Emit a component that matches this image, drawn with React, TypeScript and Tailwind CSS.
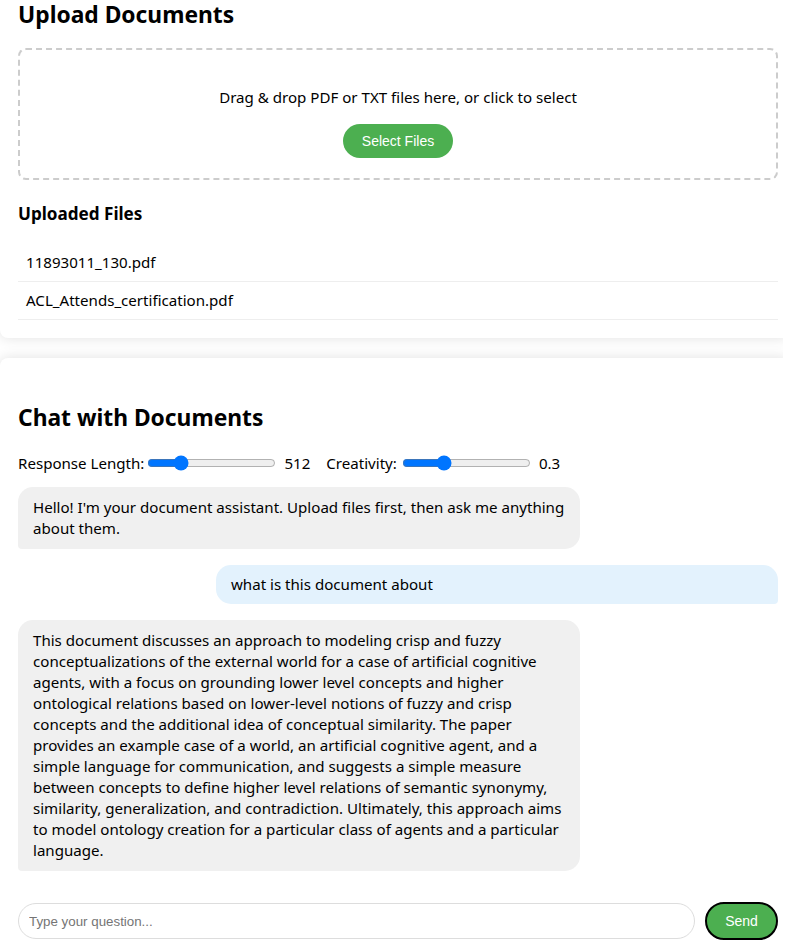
import React, { useState } from "react";

const answer =
  "This document discusses an approach to modeling crisp and fuzzy conceptualizations of the external world for a case of artificial cognitive agents, with a focus on grounding lower level concepts and higher ontological relations based on lower-level notions of fuzzy and crisp concepts and the additional idea of conceptual similarity. The paper provides an example case of a world, an artificial cognitive agent, and a simple language for communication, and suggests a simple measure between concepts to define higher level relations of semantic synonymy, similarity, generalization, and contradiction. Ultimately, this approach aims to model ontology creation for a particular class of agents and a particular language.";

export default function App() {
  const [len, setLen] = useState(512);
  const [creat, setCreat] = useState(0.3);
  const files = ["11893011_130.pdf", "ACL_Attends_certification.pdf"];

  return (
    <div className="w-[783px] overflow-hidden bg-white font-['Noto_Sans',sans-serif] text-[15.1px] leading-[21px] text-black">
      {/* Upload card */}
      <div className="w-[790px] rounded-b-lg bg-white pl-[18px] pr-[12px] pt-[1px] pb-[18px] shadow-[0_0_14px_rgba(0,0,0,0.12)]">
        <h2 className="m-0 text-[22.8px] font-bold leading-[28px]">Upload Documents</h2>
        <div className="mt-[19px] rounded-lg border-2 border-dashed border-[#cccccc] px-5 pt-[21px] pb-5 text-center">
          <p className="my-4">Drag &amp; drop PDF or TXT files here, or click to select</p>
          <button className="h-[34px] rounded-full bg-[#4caf50] px-[19px] font-['Liberation_Sans',Arial,sans-serif] text-[14px] text-white">
            Select Files
          </button>
        </div>
        <h3 className="mt-[22px] text-[17.1px] font-bold leading-[24px]">Uploaded Files</h3>
        <ul className="mt-[18px]">
          {files.map((f) => (
            <li key={f} className="border-b border-[#eeeeee] px-2 py-2">
              {f}
            </li>
          ))}
        </ul>
      </div>

      {/* Chat card */}
      <div className="mt-5 w-[790px] rounded-t-lg bg-white pl-[18px] pr-[12px] pt-[46px] pb-6 shadow-[0_0_14px_rgba(0,0,0,0.12)]">
        <h2 className="m-0 text-[22.8px] font-bold leading-[28px]">Chat with Documents</h2>
        <div className="mt-[19px] flex h-6 items-center">
          <span>Response Length:</span>
          <input
            type="range"
            min={64}
            max={2048}
            value={len}
            onChange={(e) => setLen(Number(e.target.value))}
            className="ml-[3px] w-[129px] accent-[#0075ff]"
          />
          <span className="ml-[8px]">{len}</span>
          <span className="ml-[16px]">Creativity:</span>
          <input
            type="range"
            min={0}
            max={1}
            step={0.1}
            value={creat}
            onChange={(e) => setCreat(Number(e.target.value))}
            className="ml-[5px] w-[129px] accent-[#0075ff]"
          />
          <span className="ml-[8px]">{creat}</span>
        </div>

        <div className="mt-[12px] flex flex-col gap-4">
          <div className="w-[562px] self-start rounded-[15px] rounded-bl-[4px] bg-[#f0f0f0] px-[15px] py-[10px]">
            Hello! I'm your document assistant. Upload files first, then ask me anything about them.
          </div>
          <div className="w-[562px] self-end rounded-[15px] rounded-br-[4px] bg-[#e3f2fd] px-[15px] py-[9px]">
            what is this document about
          </div>
          <div className="w-[562px] self-start rounded-[15px] rounded-bl-[4px] bg-[#f0f0f0] px-[15px] py-[10px]">
            {answer}
          </div>
        </div>

        <div className="mt-[31px] flex items-center gap-[10px]">
          <input
            type="text"
            placeholder="Type your question..."
            className="h-9 flex-1 rounded-full border border-[#dddddd] px-[10px] font-['Liberation_Sans',Arial,sans-serif] text-[13.33px] outline-none placeholder:text-[#757575]"
          />
          <button className="h-[38px] w-[73px] rounded-full border-2 border-black bg-[#4caf50] font-['Liberation_Sans',Arial,sans-serif] text-[14px] text-white">
            Send
          </button>
        </div>
      </div>
    </div>
  );
}
